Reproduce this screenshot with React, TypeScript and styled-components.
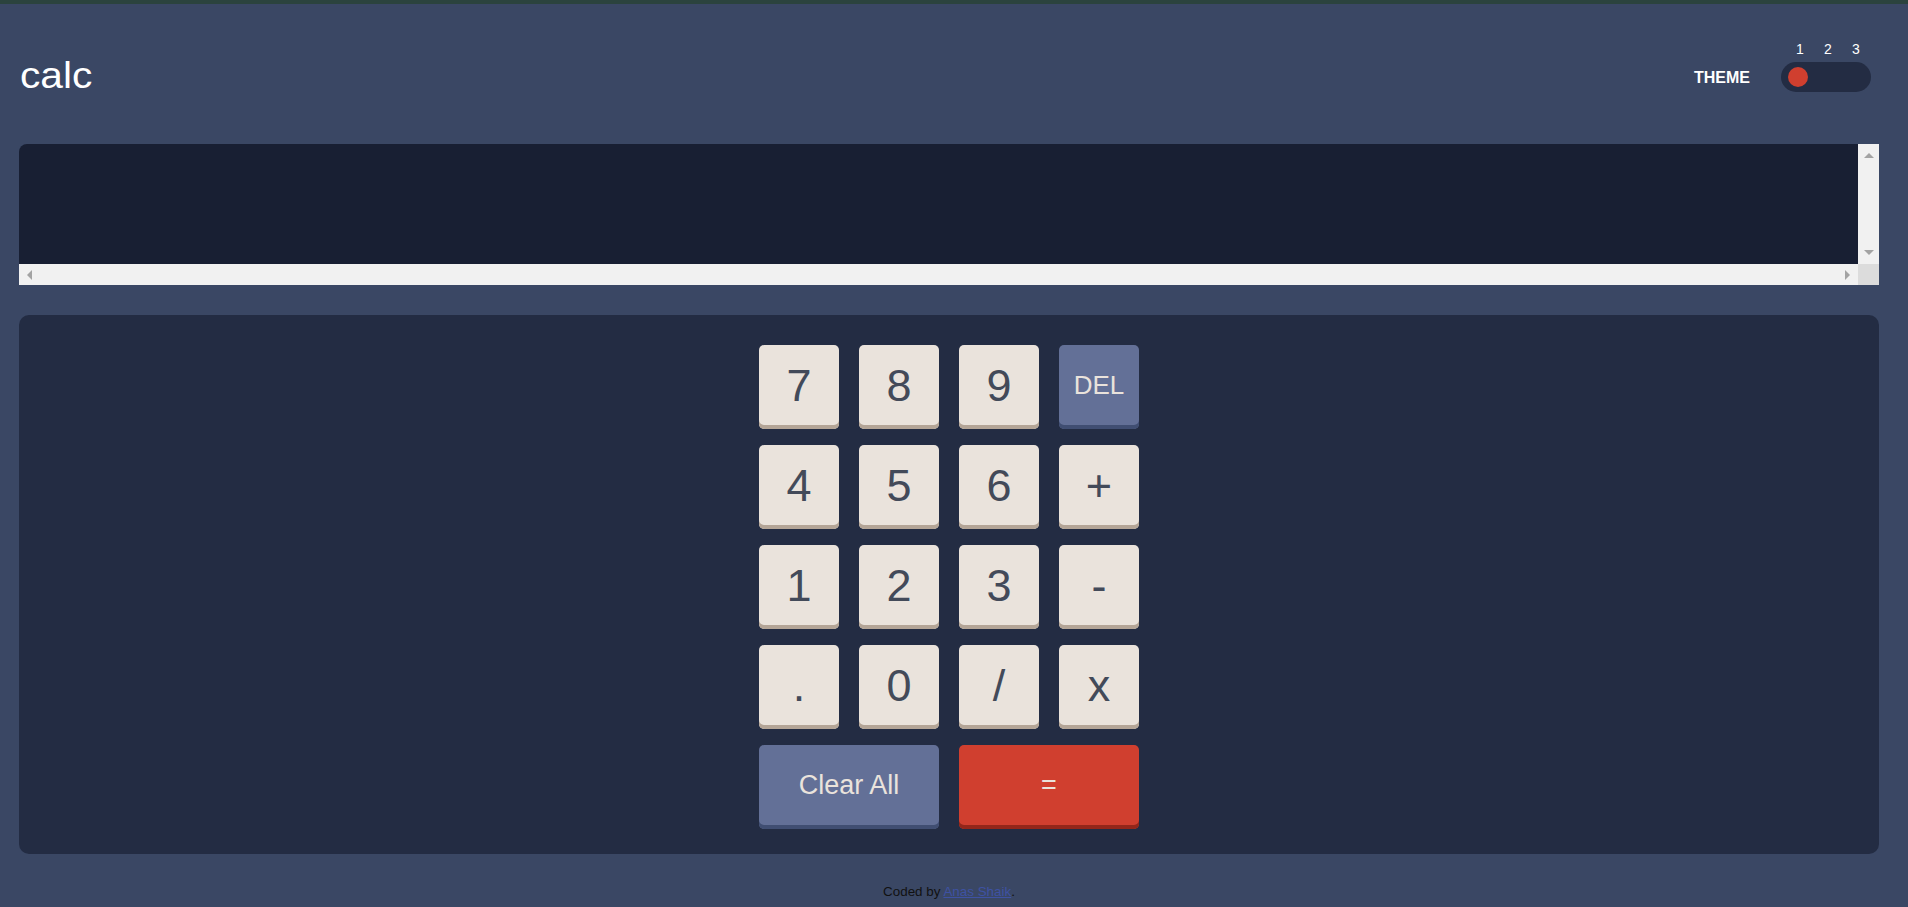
import React from "react";
import styled, { createGlobalStyle } from "styled-components";

const GlobalStyle = createGlobalStyle`
  html, body {
    margin: 0;
    padding: 0;
    background: #3a4764;
    font-family: "Liberation Sans", Arial, sans-serif;
  }
  * { box-sizing: border-box; }
`;

const TopStrip = styled.div`
  height: 4px;
  background: #2b433e;
`;

const Page = styled.div`
  padding: 0 29px 0 19px;
`;

const Header = styled.header`
  height: 140px;
  padding-top: 38px;
  display: flex;
  justify-content: space-between;
  align-items: flex-start;
`;

const Logo = styled.h1`
  margin: 15px 0 0 1px;
  font-size: 37px;
  line-height: 37px;
  font-weight: 400;
  color: #ffffff;
  display: inline-block;
  transform: scaleX(1.1);
  transform-origin: left center;
`;

const ThemeGroup = styled.div`
  display: flex;
  align-items: flex-end;
  gap: 31px;
  margin-right: 8px;
`;

const ThemeLabel = styled.span`
  height: 30px;
  line-height: 30px;
  padding-top: 1px;
  font-size: 16px;
  font-weight: 700;
  color: #ffffff;
`;

const SwitchColumn = styled.div`
  display: flex;
  flex-direction: column;
  gap: 6px;
`;

const NumberRow = styled.div`
  display: flex;
  justify-content: center;
  padding-left: 4px;
`;

const NumberLabel = styled.span`
  width: 28px;
  text-align: center;
  font-size: 14px;
  line-height: 14px;
  color: #ffffff;
`;

const Track = styled.div`
  width: 90px;
  height: 30px;
  border-radius: 15px;
  background: #232c43;
  display: flex;
  align-items: center;
  padding: 0 7px;
`;

const Knob = styled.span`
  width: 20px;
  height: 20px;
  border-radius: 50%;
  background: #d03f2f;
`;

const Screen = styled.div`
  display: grid;
  grid-template-columns: 1fr 21px;
  grid-template-rows: 120px 21px;
`;

const ScreenArea = styled.div`
  background: #181f33;
  border-top-left-radius: 8px;
`;

const VScroll = styled.div`
  background: #f1f1f1;
  display: flex;
  flex-direction: column;
  justify-content: space-between;
  align-items: center;
  padding: 9px 0 9px;
`;

const HScroll = styled.div`
  background: #f1f1f1;
  display: flex;
  justify-content: space-between;
  align-items: center;
  padding: 0 8px;
`;

const Corner = styled.div`
  background: #dcdcdc;
`;

const Keypad = styled.section`
  margin-top: 30px;
  background: #232c43;
  border-radius: 10px;
  padding: 30px 0 25px;
  display: flex;
  justify-content: center;
`;

const KeyGrid = styled.div`
  display: grid;
  grid-template-columns: repeat(4, 80px);
  grid-auto-rows: 84px;
  column-gap: 20px;
  row-gap: 16px;
`;

type Variant = "num" | "del" | "reset" | "equals";

const palette: Record<Variant, { bg: string; shadow: string; color: string; size: string }> = {
  num: { bg: "#eae3dc", shadow: "#b4a597", color: "#434a59", size: "45px" },
  del: { bg: "#637097", shadow: "#404e72", color: "#eae3dc", size: "26px" },
  reset: { bg: "#637097", shadow: "#404e72", color: "#eae3dc", size: "27px" },
  equals: { bg: "#d03f2f", shadow: "#93261a", color: "#eae3dc", size: "27px" },
};

const Key = styled.button<{ $variant: Variant; $span?: number }>`
  grid-column: span ${(p) => p.$span ?? 1};
  border: none;
  margin: 0;
  border-radius: 5px;
  padding: 0 0 4px;
  display: flex;
  align-items: center;
  justify-content: center;
  font-family: "Liberation Sans", Arial, sans-serif;
  font-size: ${(p) => palette[p.$variant].size};
  line-height: 1;
  color: ${(p) => palette[p.$variant].color};
  background: ${(p) => palette[p.$variant].bg};
  box-shadow: inset 0 -4px 0 ${(p) => palette[p.$variant].shadow};
  cursor: pointer;
`;

const Footer = styled.footer`
  margin-top: 30px;
  text-align: center;
  font-size: 13.4px;
  color: #111111;
`;

const FooterLink = styled.a`
  color: #3e52a3;
  text-decoration: underline;
`;

const Arrow = ({ dir }: { dir: "up" | "down" | "left" | "right" }) => {
  const horizontal = dir === "left" || dir === "right";
  const w = horizontal ? 5 : 10;
  const h = horizontal ? 10 : 5;
  const points =
    dir === "up"
      ? "0,5 5,0 10,5"
      : dir === "down"
      ? "0,0 10,0 5,5"
      : dir === "left"
      ? "5,0 5,10 0,5"
      : "0,0 5,5 0,10";
  return (
    <svg width={w} height={h} viewBox={`0 0 ${w} ${h}`}>
      <polygon points={points} fill="#a3a3a3" />
    </svg>
  );
};

const rows: { label: string; variant: Variant; span?: number }[] = [
  { label: "7", variant: "num" },
  { label: "8", variant: "num" },
  { label: "9", variant: "num" },
  { label: "DEL", variant: "del" },
  { label: "4", variant: "num" },
  { label: "5", variant: "num" },
  { label: "6", variant: "num" },
  { label: "+", variant: "num" },
  { label: "1", variant: "num" },
  { label: "2", variant: "num" },
  { label: "3", variant: "num" },
  { label: "-", variant: "num" },
  { label: ".", variant: "num" },
  { label: "0", variant: "num" },
  { label: "/", variant: "num" },
  { label: "x", variant: "num" },
  { label: "Clear All", variant: "reset", span: 2 },
  { label: "=", variant: "equals", span: 2 },
];

export default function App() {
  return (
    <>
      <GlobalStyle />
      <TopStrip />
      <Page>
        <Header>
          <Logo>calc</Logo>
          <ThemeGroup>
            <ThemeLabel>THEME</ThemeLabel>
            <SwitchColumn>
              <NumberRow>
                <NumberLabel>1</NumberLabel>
                <NumberLabel>2</NumberLabel>
                <NumberLabel>3</NumberLabel>
              </NumberRow>
              <Track>
                <Knob />
              </Track>
            </SwitchColumn>
          </ThemeGroup>
        </Header>
        <Screen>
          <ScreenArea />
          <VScroll>
            <Arrow dir="up" />
            <Arrow dir="down" />
          </VScroll>
          <HScroll>
            <Arrow dir="left" />
            <Arrow dir="right" />
          </HScroll>
          <Corner />
        </Screen>
        <Keypad>
          <KeyGrid>
            {rows.map((k) => (
              <Key key={k.label} $variant={k.variant} $span={k.span}>
                {k.label}
              </Key>
            ))}
          </KeyGrid>
        </Keypad>
        <Footer>
          Coded by <FooterLink href="#">Anas Shaik</FooterLink>.
        </Footer>
      </Page>
    </>
  );
}
